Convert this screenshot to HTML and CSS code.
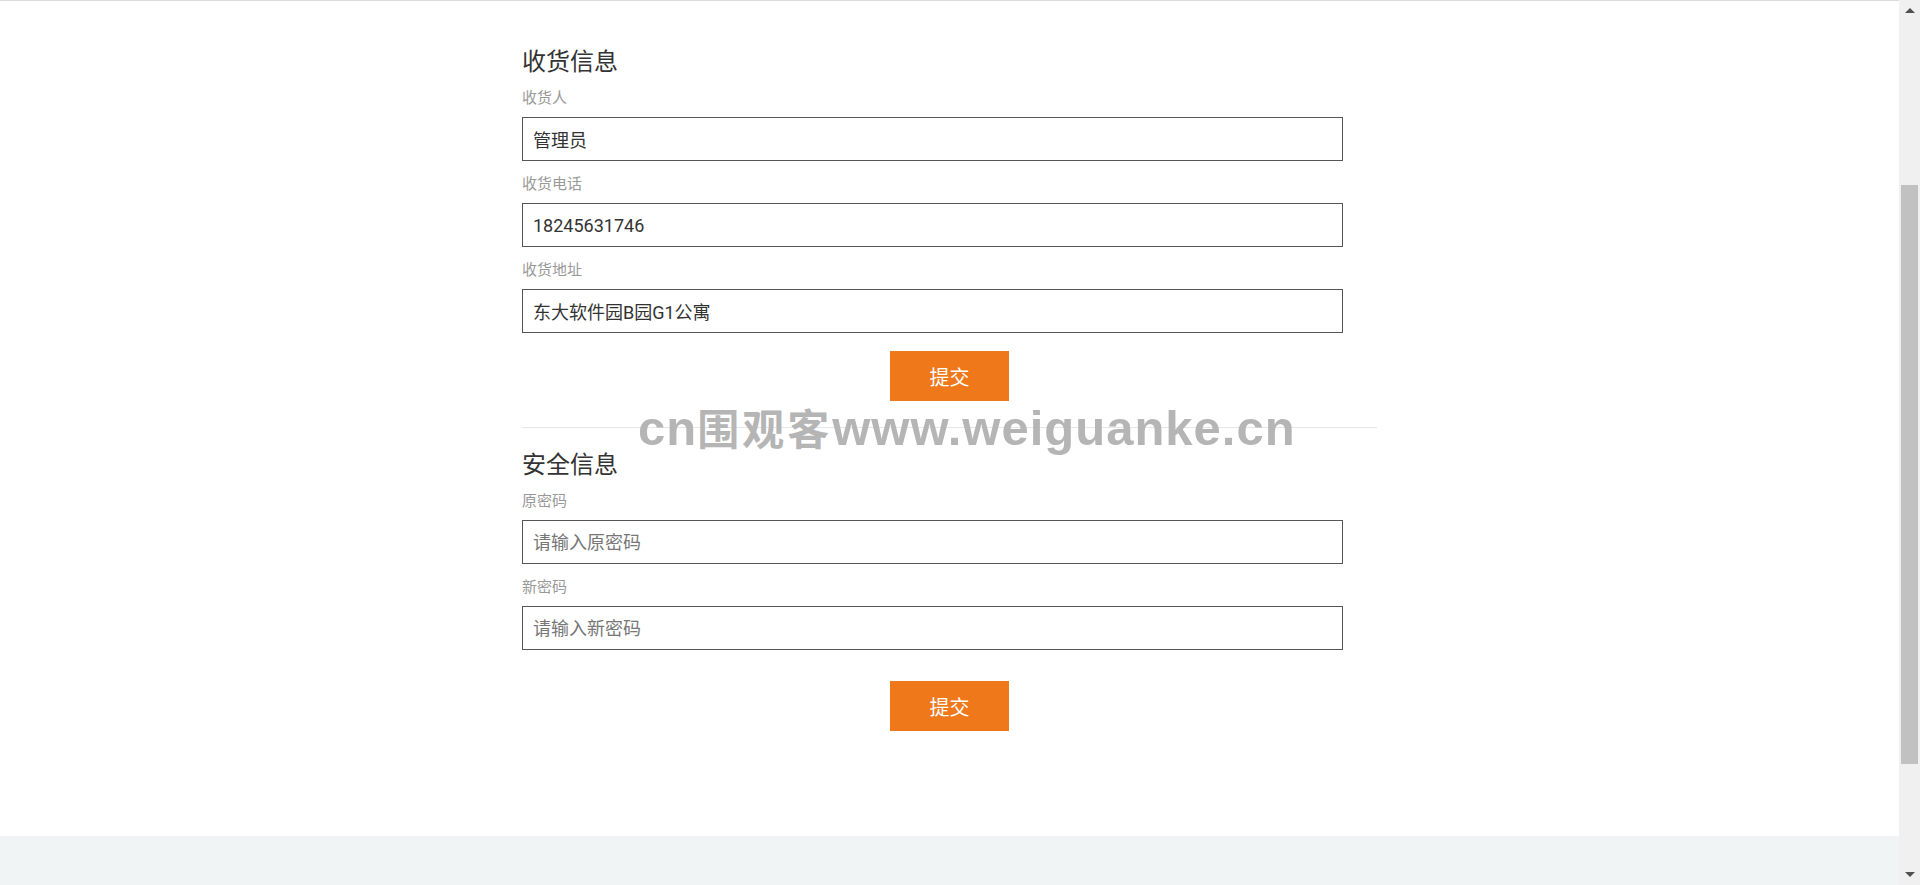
FILE: index.html
```html
<!DOCTYPE html>
<html lang="zh-CN">
<head>
  <meta charset="UTF-8">
  <title>个人信息</title>
  <link rel="stylesheet" href="styles.css">
</head>
<body>
  <div class="viewport">
    <div class="page">
      <div class="content">
        <div class="container">
          <form class="form-section section-address">
            <h2 class="section-title">收货信息</h2>
            <div class="form-group">
              <label class="form-label">收货人</label>
              <input class="form-input" type="text" value="管理员">
            </div>
            <div class="form-group">
              <label class="form-label">收货电话</label>
              <input class="form-input" type="text" value="18245631746">
            </div>
            <div class="form-group">
              <label class="form-label">收货地址</label>
              <input class="form-input" type="text" value="东大软件园B园G1公寓">
            </div>
            <button class="submit-btn" type="button">提交</button>
          </form>
          <div class="divider"></div>
          <form class="form-section section-security">
            <h2 class="section-title">安全信息</h2>
            <div class="form-group">
              <label class="form-label">原密码</label>
              <input class="form-input" type="password" placeholder="请输入原密码">
            </div>
            <div class="form-group">
              <label class="form-label">新密码</label>
              <input class="form-input" type="password" placeholder="请输入新密码">
            </div>
            <button class="submit-btn submit-btn-loose" type="button">提交</button>
          </form>
        </div>
      </div>
      <div class="footer"></div>
      <div class="watermark">cn<span class="watermark-cjk">围观客</span>www.weiguanke.cn</div>
    </div>
    <div class="scrollbar">
      <div class="sb-btn"><span class="sb-arrow-up"></span></div>
      <div class="sb-track"><div class="sb-thumb"></div></div>
      <div class="sb-btn"><span class="sb-arrow-down"></span></div>
    </div>
  </div>
</body>
</html>
```

FILE: styles.css
```css
body {
  margin: 0;
  padding: 0;
  background: #fff;
  font-family: Roboto, "Noto Sans CJK SC", sans-serif;
  color: #333;
  overflow: hidden;
}
.viewport {
  display: flex;
  height: 885px;
}
.page {
  flex: 1;
  display: flex;
  flex-direction: column;
  position: relative;
  border-top: 1px solid #dcdcdc;
  overflow: hidden;
}
.content {
  flex: 1;
}
.container {
  width: 855px;
  margin: 0 auto;
}
.form-section {
  margin: 0;
}
.section-address {
  padding: 42px 0 26px 0;
}
.section-security {
  padding: 18px 0 105px 0;
}
.section-title {
  margin: 0 0 11px 0;
  font-family: "Noto Sans CJK SC", sans-serif;
  font-size: 24px;
  line-height: 34px;
  font-weight: 400;
  color: #333;
}
.form-group {
  margin-bottom: 13px;
}
.form-label {
  display: block;
  font-size: 15px;
  line-height: 20px;
  color: #999;
  margin-bottom: 9px;
}
.form-input {
  display: block;
  box-sizing: border-box;
  width: 821px;
  height: 44px;
  margin: 0;
  padding: 0 10px;
  border: 1px solid #555;
  border-radius: 0;
  font-family: Roboto, "Noto Sans CJK SC", sans-serif;
  font-size: 18px;
  color: #333;
  background: #fff;
  outline: none;
}
.form-input::placeholder {
  color: #777;
}
.submit-btn {
  display: block;
  width: 119px;
  height: 50px;
  margin: 18px auto 0 auto;
  padding: 0;
  border: none;
  border-radius: 0;
  background: #ef781b;
  color: #fff;
  font-family: "Noto Sans CJK SC", sans-serif;
  font-size: 20px;
  cursor: pointer;
}
.submit-btn-loose {
  margin-top: 31px;
}
.divider {
  height: 1px;
  background: #e6e6e6;
}
.footer {
  height: 49px;
  background: #f1f4f5;
}
.watermark {
  position: absolute;
  left: 638px;
  top: 401px;
  font-family: "Liberation Sans", Arial, sans-serif;
  font-weight: bold;
  font-size: 49px;
  line-height: 49px;
  letter-spacing: 1px;
  color: #b5b5b5;
  white-space: nowrap;
  pointer-events: none;
}
.watermark-cjk {
  font-family: "Noto Sans CJK SC", sans-serif;
  font-size: 42px;
  letter-spacing: 3px;
}
.scrollbar {
  width: 21px;
  display: flex;
  flex-direction: column;
  background: #f0f0f0;
}
.sb-btn {
  height: 21px;
  display: flex;
  align-items: center;
  justify-content: center;
}
.sb-arrow-up {
  width: 0;
  height: 0;
  border-left: 5px solid transparent;
  border-right: 5px solid transparent;
  border-bottom: 5px solid #505050;
}
.sb-arrow-down {
  width: 0;
  height: 0;
  border-left: 5px solid transparent;
  border-right: 5px solid transparent;
  border-top: 5px solid #505050;
}
.sb-track {
  flex: 1;
  padding-top: 164px;
}
.sb-thumb {
  height: 579px;
  margin: 0 2px;
  background: #c1c1c1;
}
```
